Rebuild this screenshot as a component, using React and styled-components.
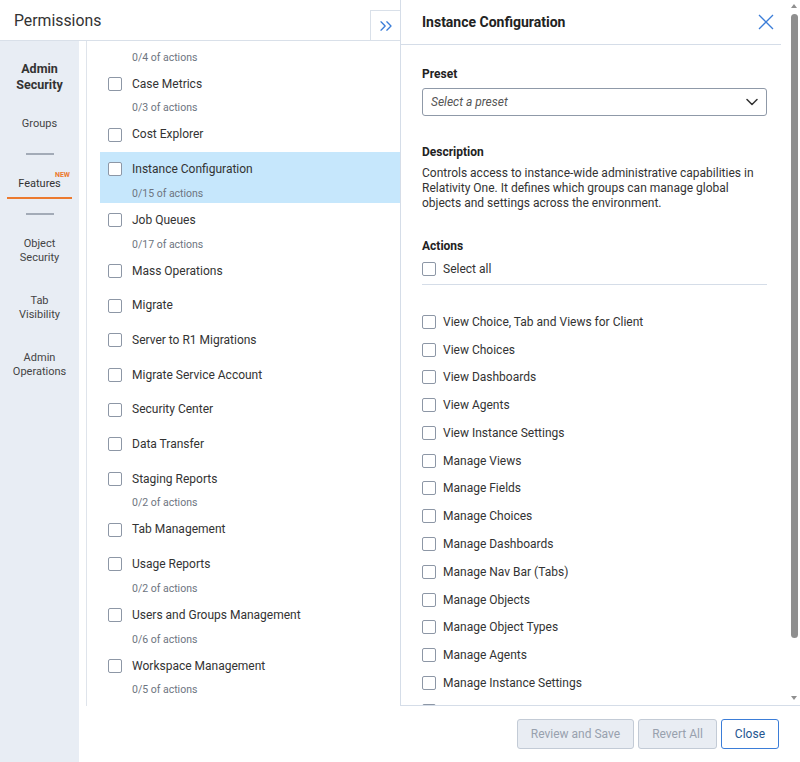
import React, { useLayoutEffect, useRef } from "react";
import styled, { createGlobalStyle } from "styled-components";

const GlobalStyle = createGlobalStyle`
  * {
    box-sizing: border-box;
  }
  html,
  body {
    margin: 0;
    padding: 0;
    background: #fff;
  }
  body {
    font-family: Roboto, "Liberation Sans", Arial, sans-serif;
    color: #333;
  }
`;

const Page = styled.div`
  display: grid;
  grid-template-columns: 79px 321px 400px;
  grid-template-rows: 41px 665px 56px;
  width: 800px;
  height: 762px;
  overflow: hidden;
`;

const Header = styled.header`
  grid-column: 1 / 3;
  grid-row: 1;
  display: flex;
  justify-content: space-between;
  border-bottom: 1px solid #d9e0e9;
`;

const Title = styled.h1`
  margin: 0;
  padding-left: 14px;
  font-size: 15.8px;
  font-weight: 400;
  line-height: 41px;
  color: #333;
`;

const CollapseButton = styled.button`
  align-self: flex-end;
  width: 30px;
  height: 31px;
  margin-bottom: -1px;
  padding: 0;
  display: flex;
  align-items: center;
  justify-content: center;
  background: #fff;
  border: 1px solid #d9e0e9;
  border-right: none;
  color: #3b7dd8;
  cursor: pointer;
`;

const Sidebar = styled.nav`
  grid-column: 1;
  grid-row: 2 / 4;
  display: flex;
  flex-direction: column;
  align-items: center;
  padding-top: 20px;
  background: #e8edf4;
`;

const SideTitle = styled.div`
  font-size: 12.5px;
  font-weight: 700;
  line-height: 16px;
  text-align: center;
  color: #333;
`;

const SideLink = styled.div`
  margin-top: ${({ $top }) => $top}px;
  font-size: 11px;
  line-height: 14px;
  text-align: center;
  color: #444;
`;

const SideDivider = styled.div`
  width: 28px;
  height: 2px;
  margin-top: ${({ $top }) => $top}px;
  background: #a3abb7;
`;

const SideTab = styled.div`
  position: relative;
  width: 65px;
  margin-top: 22px;
  padding-bottom: 6px;
  border-bottom: 2px solid #ec7a2f;
  font-size: 11px;
  line-height: 14px;
  text-align: center;
  color: #333;
`;

const NewBadge = styled.span`
  position: absolute;
  top: -6px;
  right: 2px;
  font-size: 7px;
  font-weight: 700;
  line-height: 8px;
  color: #ec7a2f;
`;

const ListPane = styled.section`
  grid-column: 2;
  grid-row: 2;
  display: flex;
  padding-left: 7px;
  min-height: 0;
`;

const ListScroll = styled.div`
  flex: 1;
  padding: 0 0 24px 13px;
  border-left: 1px solid #dfe4eb;
  overflow: hidden;
`;

const FeatureRow = styled.div`
  padding: 8px 0 ${({ $hasSub }) => ($hasSub ? "1px" : "8px")} 8px;
  background: ${({ $active }) => ($active ? "#c6e7fc" : "transparent")};
`;

const FeatureMain = styled.label`
  display: flex;
  align-items: center;
  gap: 10px;
  font-size: 12px;
  line-height: 18.7px;
  color: #333;
`;

const FeatureSub = styled.div`
  margin-top: 7px;
  padding-left: 24px;
  font-size: 10.5px;
  line-height: 16px;
  color: #6d7480;
`;

const Checkbox = styled.input.attrs({ type: "checkbox" })`
  appearance: none;
  flex: none;
  width: 14px;
  height: 14px;
  margin: 0;
  border: 1.5px solid #8d97a6;
  border-radius: 2px;
  background: #fff;
`;

const Drawer = styled.aside`
  grid-column: 3;
  grid-row: 1 / 3;
  display: flex;
  min-height: 0;
  border-left: 1px solid #d5dde8;
  border-bottom: 1px solid #d5dde8;
  background: #fff;
`;

const DrawerScroll = styled.div`
  flex: 1;
  min-width: 0;
  overflow-y: auto;
  scrollbar-width: none;
`;

const ScrollRail = styled.div`
  flex: none;
  width: 12px;
  display: flex;
  flex-direction: column;
  align-items: center;
`;

const RailArrow = styled.span`
  width: 0;
  height: 0;
  border-left: 3.5px solid transparent;
  border-right: 3.5px solid transparent;
  ${({ $down }) =>
    $down
      ? "margin: auto 0 5px; border-top: 4px solid #8f8f8f;"
      : "margin-top: 4px; border-bottom: 4px solid #8f8f8f;"}
`;

const RailThumb = styled.div`
  width: 7px;
  height: 624px;
  margin-top: 6px;
  border-radius: 4px;
  background: #8f8f8f;
`;

const DrawerHeader = styled.div`
  display: flex;
  align-items: center;
  justify-content: space-between;
  height: 45px;
  margin-right: 7px;
  padding: 0 7px 1px 21px;
  border-bottom: 1px solid #d5dde8;
`;

const DrawerTitle = styled.h2`
  margin: 0;
  font-size: 14px;
  font-weight: 700;
  color: #222;
`;

const CloseIcon = styled.button`
  display: flex;
  padding: 0;
  border: none;
  background: none;
  color: #3b7dd8;
  cursor: pointer;
`;

const DrawerBody = styled.div`
  padding: 21px 21px 40px 21px;
`;

const FieldLabel = styled.div`
  margin-top: ${({ $top }) => $top || 0}px;
  font-size: 12px;
  font-weight: 700;
  line-height: 16px;
  color: #222;
`;

const SelectBox = styled.div`
  display: flex;
  align-items: center;
  justify-content: space-between;
  height: 28px;
  margin-top: 6px;
  padding: 0 8px 0 8px;
  border: 1px solid #8f99a8;
  border-radius: 3px;
  font-size: 12px;
  font-style: italic;
  color: #555;
`;

const Description = styled.p`
  margin: 6px 0 0;
  font-size: 12px;
  line-height: 15px;
  color: #333;
`;

const SelectAll = styled.label`
  display: flex;
  align-items: center;
  gap: 7px;
  margin-top: 6px;
  font-size: 12px;
  line-height: 18px;
  color: #333;
`;

const Rule = styled.hr`
  margin: 6px 0 23px;
  border: none;
  border-top: 1px solid #d5dde8;
`;

const ActionRow = styled.label`
  display: flex;
  align-items: center;
  gap: 7px;
  height: 27.77px;
  font-size: 12px;
  color: #333;
`;

const Footer = styled.footer`
  grid-column: 2 / 4;
  grid-row: 3;
  display: flex;
  align-items: center;
  justify-content: flex-end;
  gap: 4px;
  padding-right: 21px;
`;

const Button = styled.button`
  height: 30px;
  padding: 0 13px;
  border: 1px solid ${({ $primary }) => ($primary ? "#3b7dd8" : "#c3cbd6")};
  border-radius: 3px;
  background: ${({ $primary }) => ($primary ? "#fff" : "#e9edf3")};
  font-family: inherit;
  font-size: 12px;
  color: ${({ $primary }) => ($primary ? "#24558f" : "#98a1ae")};
  cursor: ${({ disabled }) => (disabled ? "default" : "pointer")};
`;

const features = [
  { name: "Automated Workflows", sub: "0/4 of actions" },
  { name: "Case Metrics", sub: "0/3 of actions" },
  { name: "Cost Explorer" },
  { name: "Instance Configuration", sub: "0/15 of actions", active: true },
  { name: "Job Queues", sub: "0/17 of actions" },
  { name: "Mass Operations" },
  { name: "Migrate" },
  { name: "Server to R1 Migrations" },
  { name: "Migrate Service Account" },
  { name: "Security Center" },
  { name: "Data Transfer" },
  { name: "Staging Reports", sub: "0/2 of actions" },
  { name: "Tab Management" },
  { name: "Usage Reports", sub: "0/2 of actions" },
  { name: "Users and Groups Management", sub: "0/6 of actions" },
  { name: "Workspace Management", sub: "0/5 of actions" },
];

const actions = [
  "View Choice, Tab and Views for Client",
  "View Choices",
  "View Dashboards",
  "View Agents",
  "View Instance Settings",
  "Manage Views",
  "Manage Fields",
  "Manage Choices",
  "Manage Dashboards",
  "Manage Nav Bar (Tabs)",
  "Manage Objects",
  "Manage Object Types",
  "Manage Agents",
  "Manage Instance Settings",
  "Manage Resource Pools",
];

function App() {
  const listRef = useRef(null);

  // keep the feature list scrolled past the first entry
  useLayoutEffect(() => {
    if (listRef.current) listRef.current.scrollTop = 25;
  }, []);

  return (
    <>
      <GlobalStyle />
      <Page>
        <Header>
          <Title>Permissions</Title>
          <CollapseButton aria-label="Expand">
            <svg width="20" height="20" viewBox="0 0 24 24" fill="none" stroke="currentColor" strokeWidth="1.6" strokeLinecap="round" strokeLinejoin="round">
              <path d="m6 17 5-5-5-5" />
              <path d="m13 17 5-5-5-5" />
            </svg>
          </CollapseButton>
        </Header>

        <Sidebar>
          <SideTitle>
            Admin
            <br />
            Security
          </SideTitle>
          <SideLink $top={24}>Groups</SideLink>
          <SideDivider $top={22} />
          <SideTab>
            Features
            <NewBadge>NEW</NewBadge>
          </SideTab>
          <SideDivider $top={14} />
          <SideLink $top={22}>
            Object
            <br />
            Security
          </SideLink>
          <SideLink $top={29}>
            Tab
            <br />
            Visibility
          </SideLink>
          <SideLink $top={29}>
            Admin
            <br />
            Operations
          </SideLink>
        </Sidebar>

        <ListPane>
          <ListScroll ref={listRef}>
            {features.map((f) => (
              <FeatureRow key={f.name} $hasSub={!!f.sub} $active={f.active}>
                <FeatureMain>
                  <Checkbox />
                  {f.name}
                </FeatureMain>
                {f.sub && <FeatureSub>{f.sub}</FeatureSub>}
              </FeatureRow>
            ))}
          </ListScroll>
        </ListPane>

        <Drawer>
          <DrawerScroll>
            <DrawerHeader>
              <DrawerTitle>Instance Configuration</DrawerTitle>
              <CloseIcon aria-label="Close">
                <svg width="16" height="16" viewBox="0 0 16 16" fill="none" stroke="currentColor" strokeWidth="1.3">
                  <path d="M1 1 15 15M15 1 1 15" />
                </svg>
              </CloseIcon>
            </DrawerHeader>
            <DrawerBody>
              <FieldLabel>Preset</FieldLabel>
              <SelectBox>
                Select a preset
                <svg width="12" height="8" viewBox="0 0 12 8" fill="none" stroke="#333" strokeWidth="1.5" strokeLinecap="round" strokeLinejoin="round">
                  <path d="m1 1.5 5 5 5-5" />
                </svg>
              </SelectBox>

              <FieldLabel $top={28}>Description</FieldLabel>
              <Description>
                Controls access to instance-wide administrative capabilities in
                Relativity One. It defines which groups can manage global objects
                and settings across the environment.
              </Description>

              <FieldLabel $top={27}>Actions</FieldLabel>
              <SelectAll>
                <Checkbox />
                Select all
              </SelectAll>
              <Rule />
              {actions.map((a) => (
                <ActionRow key={a}>
                  <Checkbox />
                  {a}
                </ActionRow>
              ))}
            </DrawerBody>
          </DrawerScroll>
          <ScrollRail>
            <RailArrow />
            <RailThumb />
            <RailArrow $down />
          </ScrollRail>
        </Drawer>

        <Footer>
          <Button disabled>Review and Save</Button>
          <Button disabled>Revert All</Button>
          <Button $primary>Close</Button>
        </Footer>
      </Page>
    </>
  );
}

export default App;
